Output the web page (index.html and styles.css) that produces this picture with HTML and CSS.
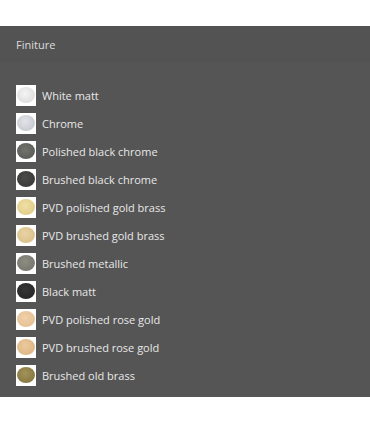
FILE: index.html
```html
<!DOCTYPE html>
<html>
<head>
<meta charset="utf-8">
<link rel="stylesheet" href="styles.css">
</head>
<body>
<div class="panel">
  <div class="panel-head">Finiture</div>
  <ul class="list">
    <li class="item"><span class="swatch"><span class="dot white"></span></span>White matt</li>
    <li class="item"><span class="swatch"><span class="dot chrome"></span></span>Chrome</li>
    <li class="item"><span class="swatch"><span class="dot pblack"></span></span>Polished black chrome</li>
    <li class="item"><span class="swatch"><span class="dot bblack"></span></span>Brushed black chrome</li>
    <li class="item"><span class="swatch"><span class="dot pgold"></span></span>PVD polished gold brass</li>
    <li class="item"><span class="swatch"><span class="dot bgold"></span></span>PVD brushed gold brass</li>
    <li class="item"><span class="swatch"><span class="dot metal"></span></span>Brushed metallic</li>
    <li class="item"><span class="swatch"><span class="dot matt"></span></span>Black matt</li>
    <li class="item"><span class="swatch"><span class="dot prose"></span></span>PVD polished rose gold</li>
    <li class="item"><span class="swatch"><span class="dot brose"></span></span>PVD brushed rose gold</li>
    <li class="item"><span class="swatch"><span class="dot oldbrass"></span></span>Brushed old brass</li>
  </ul>
</div>
</body>
</html>
```
FILE: styles.css
```css
html, body {
  margin: 0;
  padding: 0;
  background: #ffffff;
}
body {
  font-family: "Open Sans", "Liberation Sans", sans-serif;
  font-size: 11px;
}
.panel {
  margin-top: 26px;
  height: 371px;
  background: #555555;
  color: #e4e4e4;
  box-sizing: border-box;
}
.panel-head {
  height: 37px;
  padding: 0 16px;
  display: flex;
  align-items: center;
  background: #535353;
  color: #dcdcdc;
  font-size: 11px;
}
.list {
  list-style: none;
  margin: 18px 0 0;
  padding: 0 16px;
}
.item {
  height: 28px;
  display: flex;
  align-items: center;
  gap: 6px;
  color: #e8e8e8;
}
.swatch {
  width: 20px;
  height: 21px;
  background: #ffffff;
  display: flex;
  align-items: center;
  justify-content: center;
  flex: none;
}
.dot {
  width: 18px;
  height: 16px;
  border-radius: 50%;
  display: block;
}
.white { background: radial-gradient(ellipse at 45% 40%, #f4f4f4, #dcdcdc 80%, #c8c8c8); }
.chrome { background: radial-gradient(ellipse at 45% 40%, #e2e4e8, #c4c8cf 80%, #a9adb5); }
.pblack { background: radial-gradient(ellipse at 45% 40%, #72736d, #5a5b56 80%, #454641); }
.bblack { background: radial-gradient(ellipse at 45% 40%, #4c4c4a, #383837 80%, #282828); }
.pgold { background: radial-gradient(ellipse at 45% 40%, #efe0a6, #e0cb86 80%, #c9b06a); }
.bgold { background: radial-gradient(ellipse at 45% 40%, #e8d3a4, #d8c08a 80%, #c2a86e); }
.metal { background: radial-gradient(ellipse at 45% 40%, #8e8d83, #77766c 80%, #5f5e55); }
.matt { background: radial-gradient(ellipse at 45% 40%, #363636, #262626 80%, #1a1a1a); }
.prose { background: radial-gradient(ellipse at 45% 40%, #f0d1aa, #e5bf92 80%, #d0a676); }
.brose { background: radial-gradient(ellipse at 45% 40%, #ebc99c, #ddb584 80%, #c69b68); }
.oldbrass { background: radial-gradient(ellipse at 45% 40%, #a3935a, #85763f 80%, #66592c); }
```
